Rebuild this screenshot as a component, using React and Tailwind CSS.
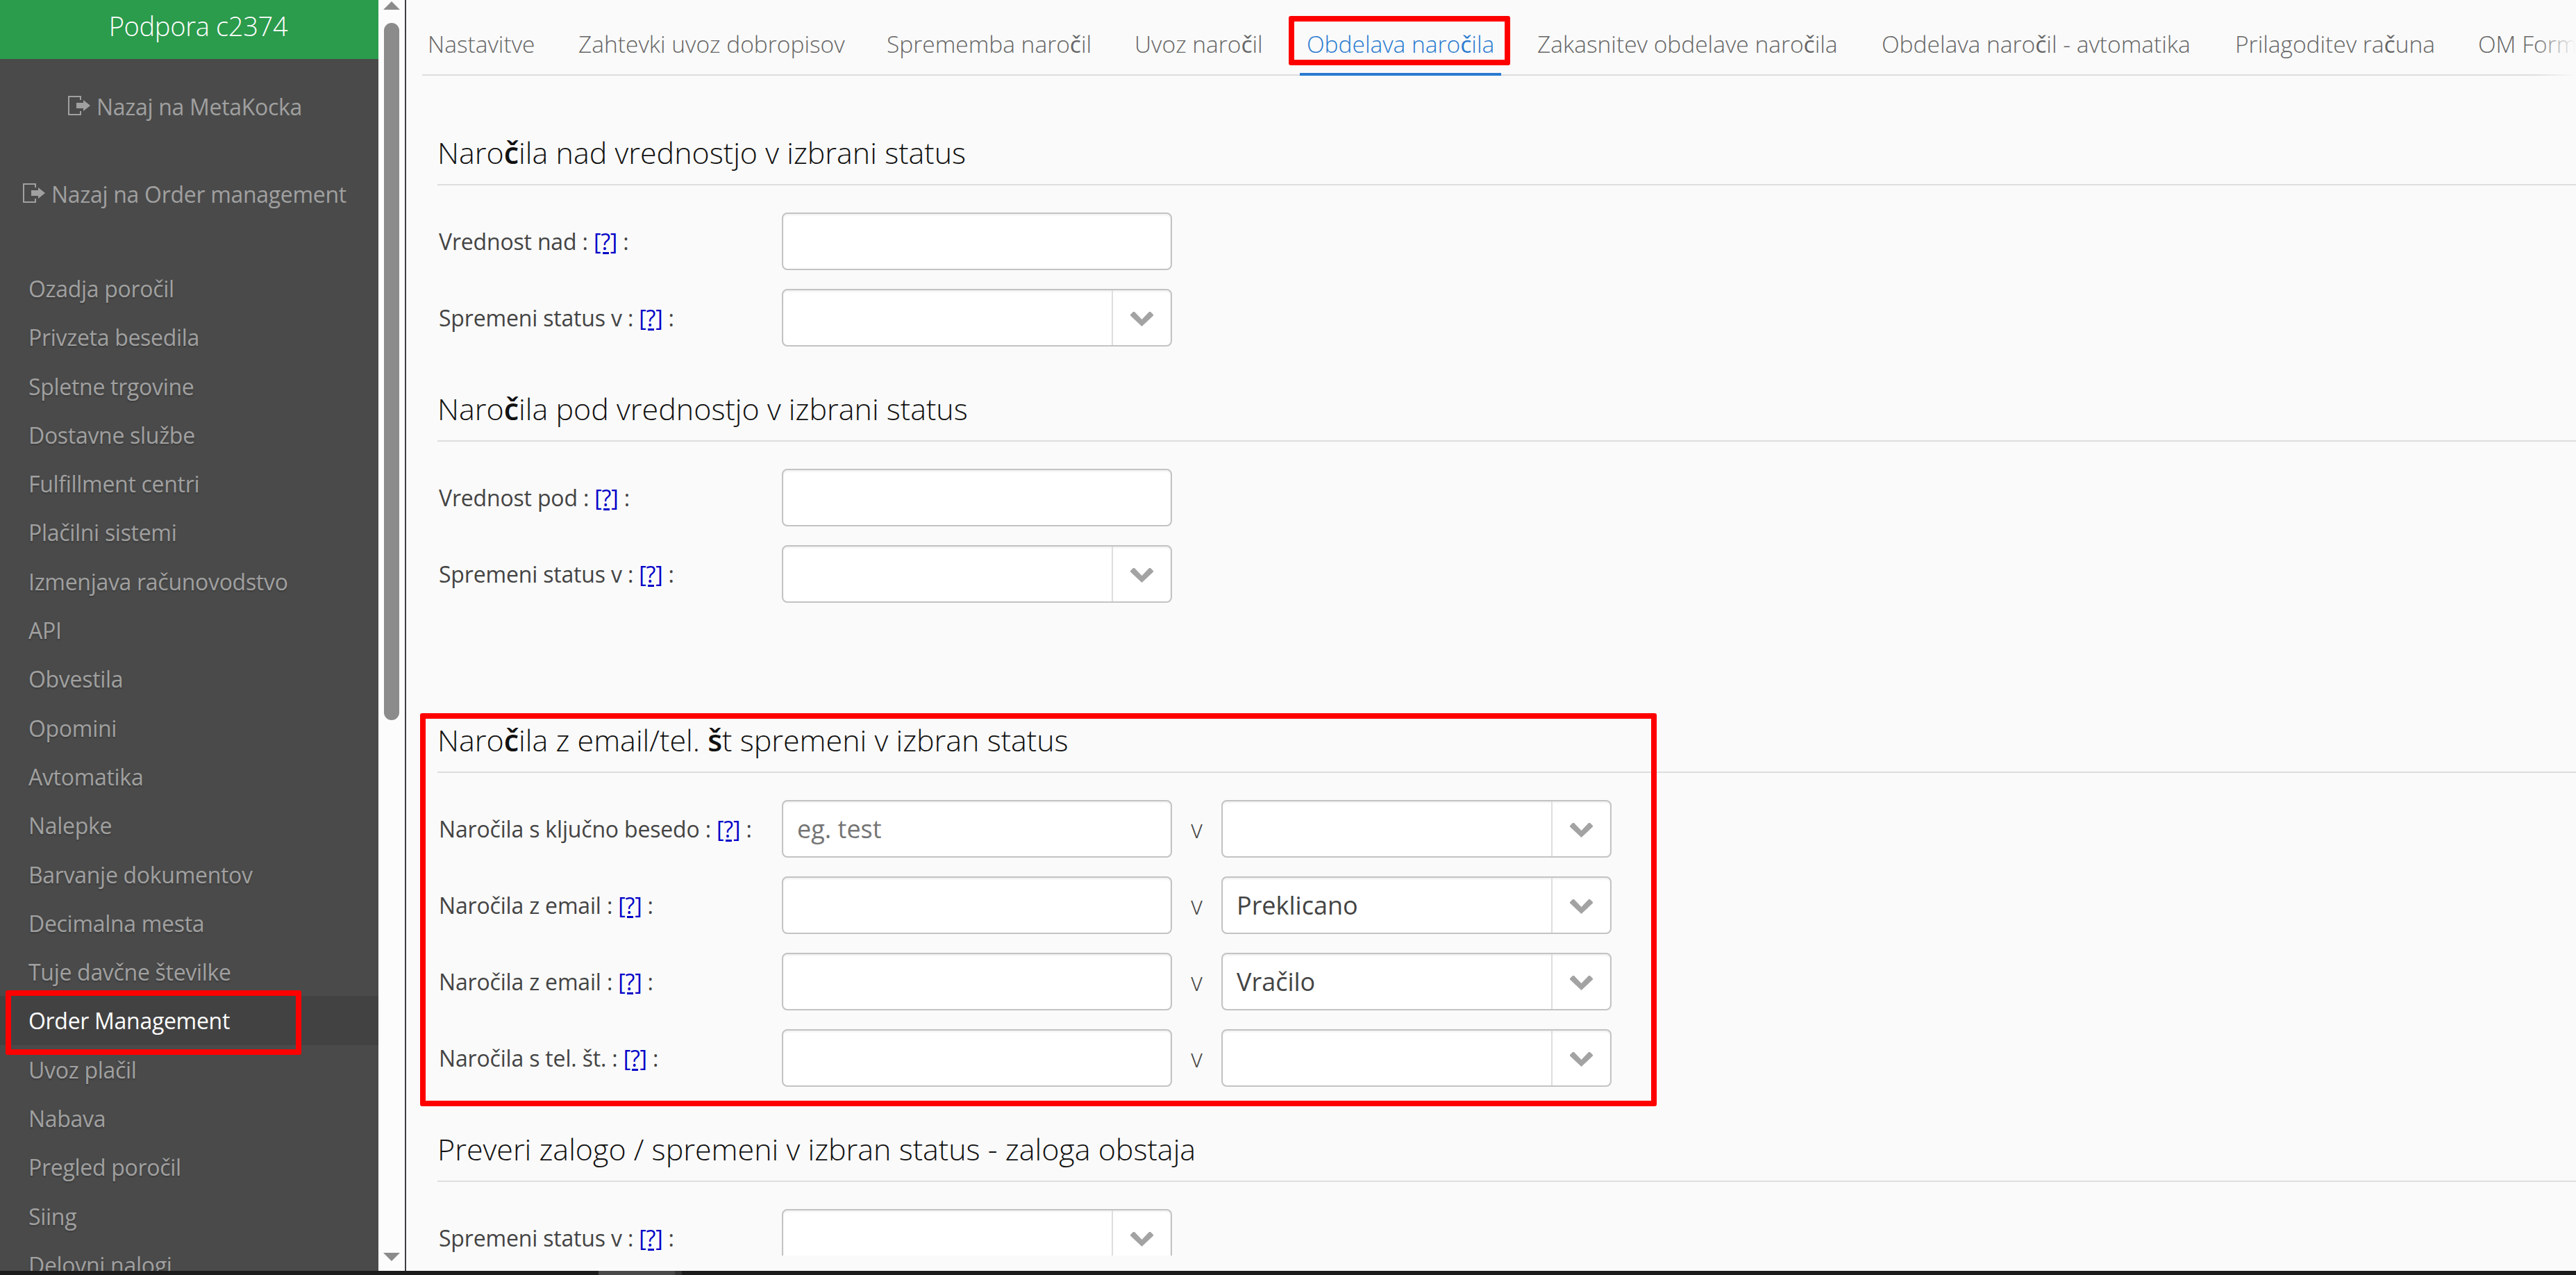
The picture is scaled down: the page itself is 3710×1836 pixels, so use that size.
import React from "react";

const menuItems = [
  "Ozadja poročil",
  "Privzeta besedila",
  "Spletne trgovine",
  "Dostavne službe",
  "Fulfillment centri",
  "Plačilni sistemi",
  "Izmenjava računovodstvo",
  "API",
  "Obvestila",
  "Opomini",
  "Avtomatika",
  "Nalepke",
  "Barvanje dokumentov",
  "Decimalna mesta",
  "Tuje davčne številke",
  "Order Management",
  "Uvoz plačil",
  "Nabava",
  "Pregled poročil",
  "Siing",
  "Delovni nalogi",
];

const tabs = [
  { label: "Nastavitve", width: "w-[155px]" },
  { label: "Zahtevki uvoz dobropisov", width: "w-[382px]" },
  { label: "Sprememba naročil", width: "w-[295px]" },
  { label: "Uvoz naročil", width: "w-[186px]" },
  { label: "Obdelava naročila", width: "w-[270px]", active: true },
  { label: "Zakasnitev obdelave naročila", width: "w-[434px]" },
  { label: "Obdelava naročil - avtomatika", width: "w-[447px]" },
  { label: "Prilagoditev računa", width: "w-[288px]" },
  { label: "OM Form", width: "w-[140px]" },
];

// č and š come from a heavier fallback face than the light text around them
function Light({ children, heavy = "font-medium" }) {
  return children.split(/([čš])/).map((part, i) =>
    part === "č" || part === "š" ? (
      <span key={i} className={heavy}>{part}</span>
    ) : (
      part
    )
  );
}

function ExitIcon() {
  return (
    <svg viewBox="0 0 33 28" className="-mt-[4px] h-[28px] w-[33px] shrink-0">
      <path d="M18 6V1H1V27H18V22" fill="none" stroke="#a0a0a0" strokeWidth="2" />
      <path d="M12 10H22V6L32 14L22 22V18H12Z" fill="#a0a0a0" />
    </svg>
  );
}

function Sidebar() {
  return (
    <aside className="w-[545px] shrink-0 overflow-hidden bg-[#4a4a4a] text-[32px] tracking-[-0.3px] text-[#a0a0a0]">
      <div className="flex h-[85px] justify-center bg-[#2b9b4c] pl-[26px] text-[38px] font-light leading-[75px] text-white">
        <span>Podpora c2374</span>
      </div>
      <div className="flex h-[138px] items-center gap-[8px] pl-[98px] leading-[46px]">
        <ExitIcon />
        <span>Nazaj na MetaKocka</span>
      </div>
      <div className="flex h-[114px] items-center gap-[8px] pl-[33px] leading-[46px]">
        <ExitIcon />
        <span>Nazaj na Order management</span>
      </div>
      <ul className="mt-[43px]">
        {menuItems.map((item) =>
          item === "Order Management" ? (
            <li key={item} className="relative h-[70.3px] bg-[#424242] pl-[41px] leading-[72px] text-white">
              {item}
              <div className="absolute -top-2 left-2 h-[93px] w-[426px] rounded-[3px] border-8 border-[#fe0000]" />
            </li>
          ) : (
            <li key={item} className="h-[70.3px] pl-[41px] leading-[72px] [text-shadow:0_2px_2px_#3c3c3c]">
              {item}
            </li>
          )
        )}
      </ul>
    </aside>
  );
}

function Scrollbar() {
  return (
    <div className="flex w-[40px] shrink-0 flex-col items-center border-r-2 border-[#3c4043] bg-[#fcfcfc]">
      <svg viewBox="0 0 24 12" className="mt-[2px] h-[12px] w-[24px]">
        <path d="M0 12L12 0L24 12Z" fill="#8b8b8b" />
      </svg>
      <div className="mt-[19px] h-[1004px] w-[22px] rounded-full bg-[#8b8b8b]" />
      <svg viewBox="0 0 24 12" className="mt-auto mb-[14px] h-[12px] w-[24px]">
        <path d="M0 0L12 12L24 0Z" fill="#8b8b8b" />
      </svg>
    </div>
  );
}

function Tabs() {
  return (
    <nav className="relative ml-[23px] h-[109px] border-b-2 border-[#dedede] text-[33.5px] font-light text-[#666]">
      <div className="-ml-[2px] flex gap-[42px]">
        {tabs.map(({ label, width, active }) => (
          <div
            key={label}
            className={
              active
                ? "h-[109px] shrink-0 border-b-4 border-[#2a7ad0] px-[10px] leading-[126px] text-[#2a7ad0]"
                : "h-[107px] shrink-0 px-[10px] leading-[126px]"
            }
          >
            <div className={width + " h-[100px] whitespace-nowrap"}>
              <Light>{label}</Light>
            </div>
          </div>
        ))}
      </div>
      <div className="absolute top-0 right-0 h-[109px] w-[60px] bg-linear-to-r from-transparent to-[#fafafa]" />
      <div className="absolute top-[23px] left-[1248px] h-[71px] w-[319px] rounded-[3px] border-8 border-[#fe0000]" />
    </nav>
  );
}

function Select({ value }) {
  return (
    <div className="flex h-[83px] w-[562px] rounded-[8px] border-2 border-[#c3c3c3] bg-white shadow-[inset_0_2px_3px_#00000010]">
      <div className="flex-1 pl-[20px] text-[36px] leading-[80px] text-[#444]">{value}</div>
      <div className="flex w-[85px] items-center justify-center border-l-2 border-[#dedede]">
        <svg viewBox="0 0 33 21" className="mt-[4px] h-[21px] w-[33px]">
          <path d="M0 5.5V4L4 0H6L16.5 11L27 0H29L33 4V5.5L16.5 21Z" fill="#a3a3a3" />
        </svg>
      </div>
    </div>
  );
}

function Input({ placeholder }) {
  return (
    <input
      placeholder={placeholder}
      className="h-[83px] w-[562px] rounded-[8px] border-2 border-[#c3c3c3] bg-white px-[20px] text-[36px] shadow-[inset_0_2px_3px_#00000010] placeholder:text-[#757575]"
    />
  );
}

function Row({ label, children }) {
  return (
    <div className="flex h-[83px] items-center">
      <div className="w-[496px] shrink-0 whitespace-nowrap pl-[2px] text-[32px] tracking-[-0.18px] text-[#444]">
        {label} :{" "}
        <a href="#" className="text-[#0000c8] underline decoration-[3px] underline-offset-[3px]">[?]</a> :
      </div>
      {children}
    </div>
  );
}

function Section({ title, children }) {
  return (
    <section>
      <h2 className="h-[137px] border-b-2 border-[#dedede] pt-[60px] text-[43px] font-light leading-[60px] text-[#111]">
        <Light heavy="font-semibold">{title}</Light>
      </h2>
      <div className="mt-[39px] flex flex-col gap-[27px]">{children}</div>
    </section>
  );
}

function KeywordRow({ label, placeholder, value }) {
  return (
    <Row label={label}>
      <Input placeholder={placeholder} />
      <span className="w-[71px] text-center text-[36px] font-light text-[#444]">v</span>
      <Select value={value} />
    </Row>
  );
}

export default function App() {
  return (
    <div className="flex h-[1836px] w-[3710px] flex-col overflow-hidden bg-[#fafafa] font-['Open_Sans',sans-serif]">
      <div className="flex h-[1830px]">
        <Sidebar />
        <Scrollbar />
        <main className="min-w-0 flex-1">
          <Tabs />
          <div className="ml-[45px] h-[1699px] overflow-hidden pt-[21px]">
            <Section title="Naročila nad vrednostjo v izbrani status">
              <Row label="Vrednost nad"><Input /></Row>
              <Row label="Spremeni status v"><Select /></Row>
            </Section>
            <Section title="Naročila pod vrednostjo v izbrani status">
              <Row label="Vrednost pod"><Input /></Row>
              <Row label="Spremeni status v"><Select /></Row>
            </Section>
            <div className="h-[108px]" />
            <Section title="Naročila z email/tel. št spremeni v izbran status">
              <KeywordRow label="Naročila s ključno besedo" placeholder="eg. test" />
              <KeywordRow label="Naročila z email" value="Preklicano" />
              <KeywordRow label="Naročila z email" value="Vračilo" />
              <KeywordRow label="Naročila s tel. št." />
            </Section>
            <Section title="Preveri zalogo / spremeni v izbran status - zaloga obstaja">
              <Row label="Spremeni status v"><Select /></Row>
            </Section>
          </div>
        </main>
      </div>
      <div className="h-[6px] bg-[#1c1c1c] pl-[862px]">
        <div className="h-full w-[120px] border-r-[10px] border-[#333] bg-[#4a4a4a]" />
      </div>
      <div className="absolute top-[1027px] left-[605px] h-[566px] w-[1781px] rounded-[3px] border-8 border-[#fe0000]" />
    </div>
  );
}
